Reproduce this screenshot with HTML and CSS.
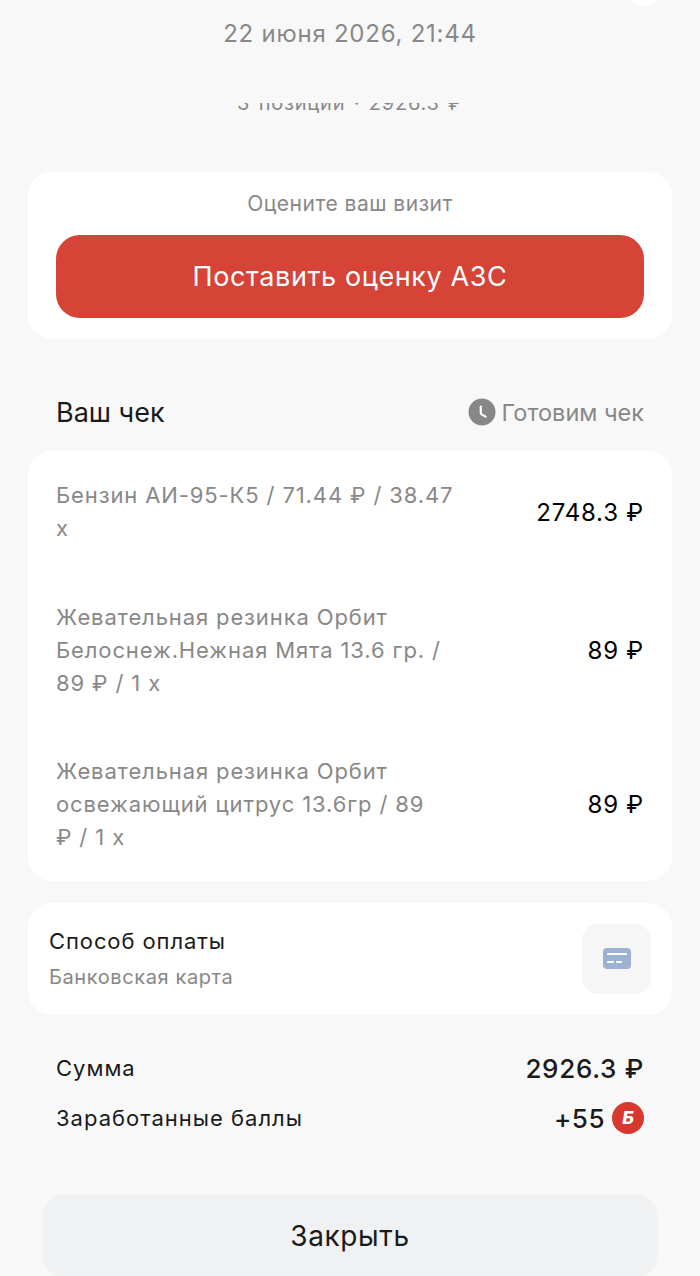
FILE: index.html
```html
<!DOCTYPE html>
<html lang="ru">
<head>
  <meta charset="UTF-8">
  <meta name="viewport" content="width=device-width, initial-scale=1.0">
  <title>Ваш чек</title>
  <link rel="stylesheet" href="styles.css">
</head>
<body>
  <div class="screen">
    <span class="top-circle"></span>

    <header class="top">
      <p class="date">22 июня 2026, 21:44</p>
      <div class="summary-clip">
        <p class="summary">3 позиции · 2926.3 ₽</p>
      </div>
    </header>

    <!-- Rating -->
    <section class="card rate">
      <p class="rate-label">Оцените ваш визит</p>
      <button class="rate-btn" type="button">Поставить оценку АЗС</button>
    </section>

    <!-- Receipt -->
    <div class="receipt-head">
      <h2>Ваш чек</h2>
      <div class="receipt-status">
        <svg class="clock" viewBox="0 0 28 28" width="28" height="28">
          <circle cx="14" cy="14" r="13.5" fill="#878787"/>
          <path d="M12.8 8.5v6.5c0 .6.3 1.1.8 1.4l4 2.2" fill="none" stroke="#fff" stroke-width="2.2" stroke-linecap="round"/>
        </svg>
        <span>Готовим чек</span>
      </div>
    </div>

    <section class="card receipt">
      <div class="item">
        <p class="item-name">Бензин АИ-95-К5 / 71.44 ₽ / 38.47 х</p>
        <span class="item-price">2748.3 ₽</span>
      </div>
      <div class="item">
        <p class="item-name">Жевательная резинка Орбит Белоснеж.Нежная Мята 13.6 гр. / 89 ₽ / 1 х</p>
        <span class="item-price">89 ₽</span>
      </div>
      <div class="item">
        <p class="item-name">Жевательная резинка Орбит освежающий цитрус 13.6гр / 89 ₽&nbsp;/&nbsp;1&nbsp;х</p>
        <span class="item-price">89 ₽</span>
      </div>
    </section>

    <!-- Payment -->
    <section class="card payment">
      <div class="payment-text">
        <p class="payment-title">Способ оплаты</p>
        <p class="payment-type">Банковская карта</p>
      </div>
      <div class="payment-icon">
        <svg viewBox="0 0 28 22" width="28" height="22">
          <rect width="28" height="21" rx="4" fill="#9DB2D3"/>
          <path d="M5 6h18M5 14h5M14 14h4" stroke="#fff" stroke-width="2.2" stroke-linecap="round"/>
        </svg>
      </div>
    </section>

    <!-- Totals -->
    <div class="totals">
      <div class="total-row">
        <span>Сумма</span>
        <span class="total-sum">2926.3 ₽</span>
      </div>
      <div class="total-row">
        <span>Заработанные баллы</span>
        <span class="points">+55 <i class="points-badge">Б</i></span>
      </div>
    </div>

    <button class="close-btn" type="button">Закрыть</button>
  </div>
</body>
</html>
```

FILE: styles.css
```css
/* General Layout */
html, body {
  margin: 0;
  padding: 0;
}

body {
  font-family: Inter, "Noto Sans", sans-serif;
  background-color: #F8F8F8;
  color: #1A1A1A;
}

p, h2 {
  margin: 0;
  font-weight: 400;
}

.screen {
  position: relative;
  height: 1276px;
  overflow: hidden;
  display: flex;
  flex-direction: column;
}

.top-circle {
  position: absolute;
  top: -38px;
  left: 622px;
  width: 44px;
  height: 44px;
  border-radius: 50%;
  background: #fff;
}

/* Header */
.top {
  height: 172px;
  flex-shrink: 0;
  text-align: center;
  color: #888;
}

.date {
  padding-top: 19px;
  font-size: 24px;
  line-height: 30px;
  letter-spacing: 0.76px;
}

.summary-clip {
  height: 10px;
  margin-top: 54px;
  overflow: hidden;
}

.summary {
  margin-top: -12px;
  font-size: 20px;
  line-height: 24px;
  letter-spacing: 0.8px;
  word-spacing: 2px;
}

/* Cards */
.card {
  margin: 0 28px;
  background: #fff;
  border-radius: 24px;
}

.rate {
  height: 167px;
  flex-shrink: 0;
  padding: 19px 28px 0;
  box-sizing: border-box;
  text-align: center;
}

.rate-label {
  font-size: 21px;
  line-height: 26px;
  letter-spacing: 0.5px;
  color: #888;
}

.rate-btn {
  display: block;
  width: 100%;
  height: 83px;
  margin-top: 18px;
  border: none;
  border-radius: 24px;
  background-color: #D64337;
  color: #fff;
  font-family: inherit;
  font-size: 27px;
  letter-spacing: 0.6px;
}

/* Receipt */
.receipt-head {
  height: 112px;
  flex-shrink: 0;
  box-sizing: border-box;
  padding-top: 34px;
  margin: 0 56px;
  display: flex;
  align-items: center;
  justify-content: space-between;
}

.receipt-head h2 {
  font-size: 27px;
  color: #1A1A1A;
}

.receipt-status {
  display: flex;
  align-items: center;
  gap: 6px;
  font-size: 23.5px;
  color: #888;
}

.receipt {
  height: 430px;
  flex-shrink: 0;
  padding: 28px 28px 0;
  box-sizing: border-box;
  display: flex;
  flex-direction: column;
  gap: 55px;
}

.item {
  display: flex;
  align-items: center;
  justify-content: space-between;
}

.item:first-child {
  margin-bottom: 1px;
}

.item-name {
  width: 400px;
  font-size: 22px;
  line-height: 33px;
  letter-spacing: 0.88px;
  color: #888;
}

.item-price {
  font-size: 24px;
  letter-spacing: 0.8px;
  color: #000;
}

/* Payment */
.payment {
  height: 112px;
  flex-shrink: 0;
  margin-top: 22px;
  padding: 0 21px;
  display: flex;
  align-items: center;
  justify-content: space-between;
}

.payment-text {
  padding-bottom: 1px;
}

.payment-title {
  font-size: 22px;
  line-height: 28px;
  letter-spacing: 0.9px;
}

.payment-type {
  margin-top: 9px;
  font-size: 20px;
  line-height: 26px;
  letter-spacing: 0.6px;
  color: #888;
}

.payment-icon {
  width: 69px;
  height: 70px;
  border-radius: 16px;
  background: #F6F6F7;
  display: flex;
  align-items: center;
  justify-content: center;
}

/* Totals */
.totals {
  margin: 38px 56px 0;
  display: flex;
  flex-direction: column;
  gap: 20px;
}

.total-row {
  height: 30px;
  display: flex;
  align-items: center;
  justify-content: space-between;
  font-size: 22px;
  letter-spacing: 1px;
}

.total-sum {
  font-size: 26px;
  font-weight: 500;
  letter-spacing: 0.7px;
}

.points {
  display: flex;
  align-items: center;
  gap: 7px;
  font-size: 26px;
  font-weight: 500;
  letter-spacing: 0.5px;
}

.points-badge {
  width: 32px;
  height: 32px;
  border-radius: 50%;
  background: #D8392F;
  color: #fff;
  font-size: 18px;
  font-weight: 800;
  letter-spacing: 0;
  text-align: center;
  line-height: 32px;
}

.close-btn {
  display: block;
  flex-shrink: 0;
  width: 616px;
  height: 84px;
  margin: 61px 42px 0;
  border: none;
  border-radius: 24px;
  background-color: #F0F1F3;
  color: #1A1A1A;
  font-family: inherit;
  font-size: 28px;
  letter-spacing: 0.6px;
}
```
